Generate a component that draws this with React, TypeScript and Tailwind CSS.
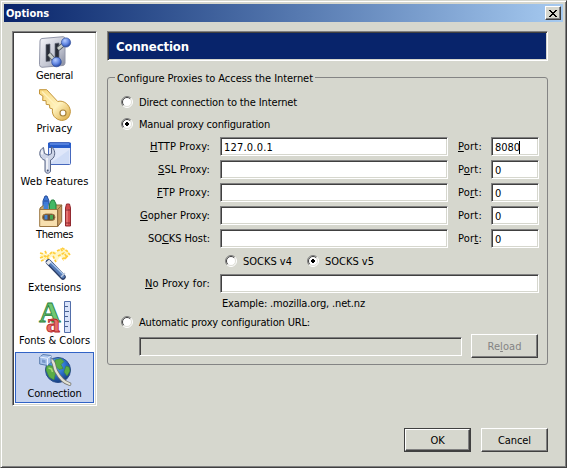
import { useLayoutEffect, useRef, useState, type ReactNode } from 'react';

/* Text run spaced out to a fixed advance width */
function T({ w, children, className = '' }: { w: number; children: ReactNode; className?: string }) {
  const ref = useRef<HTMLSpanElement>(null);
  const [gap, setGap] = useState(0);
  useLayoutEffect(() => {
    const el = ref.current;
    if (!el) return;
    const n = (el.textContent || '').length;
    setGap((w - el.getBoundingClientRect().width) / n);
  }, [w]);
  return (
    <span ref={ref} className={`inline-block whitespace-pre ${className}`} style={{ letterSpacing: gap }}>
      {children}
    </span>
  );
}

/* Label with an underlined access key at index k */
function Key({ text, k, w }: { text: string; k: number; w: number }) {
  return (
    <T w={w}>
      {text.slice(0, k)}
      <span className="underline decoration-1 underline-offset-1">{text.charAt(k)}</span>
      {text.slice(k + 1)}
    </T>
  );
}

const sunken =
  'border border-t-[#808080] border-l-[#808080] border-r-white border-b-white shadow-[inset_1px_1px_0_#404040,inset_-1px_-1px_0_#d6d7ce]';
const raised =
  'border border-t-white border-l-white border-r-[#404040] border-b-[#404040] shadow-[inset_-1px_-1px_0_#808080]';

function Field({ className, value, w = 0, caret }: { className: string; value?: string; w?: number; caret?: boolean }) {
  return (
    <div className={`flex h-[19px] items-center bg-white pl-[3px] pt-px ${sunken} ${className}`}>
      {value && <T w={w}>{value}</T>}
      {caret && <span className="-ml-px h-[13px] w-px bg-black" />}
    </div>
  );
}

function Radio({ on }: { on?: boolean }) {
  return (
    <svg width="12" height="12" viewBox="0 0 12 12" className="shrink-0">
      <circle cx="6" cy="6" r="5" fill="#fff" />
      <path d="M2.1 9.9A5.5 5.5 0 0 1 9.9 2.1" fill="none" stroke="#808080" />
      <path d="M2.8 9.2A4.5 4.5 0 0 1 9.2 2.8" fill="none" stroke="#404040" />
      <path d="M2.1 9.9A5.5 5.5 0 0 0 9.9 2.1" fill="none" stroke="#fff" />
      <path d="M2.8 9.2A4.5 4.5 0 0 0 9.2 2.8" fill="none" stroke="#dfdfd8" />
      {on && <path d="M5 4h2v1h1v2H7v1H5V7H4V5h1z" fill="#000" />}
    </svg>
  );
}

function Icon({ children }: { children: ReactNode }) {
  return (
    <svg width="32" height="32" viewBox="0 0 32 32" className="block overflow-visible">
      {children}
    </svg>
  );
}

const GeneralIcon = () => (
  <Icon>
    <defs>
      <linearGradient id="plate" x1="0" y1="0" x2="1" y2="1">
        <stop offset="0" stopColor="#f8f8fc" />
        <stop offset=".6" stopColor="#c3c6d2" />
        <stop offset="1" stopColor="#82879b" />
      </linearGradient>
      <radialGradient id="ball" cx=".38" cy=".3" r=".7">
        <stop offset="0" stopColor="#b5ccff" />
        <stop offset=".6" stopColor="#6286e2" />
        <stop offset="1" stopColor="#2848a0" />
      </radialGradient>
    </defs>
    <path d="M3 2.5 24 .7Q26 .6 26 3v24q0 2-2 2.500L3 31.300Q.5 31 .5 28.500L1 5Q1 2.800 3 2.500z" fill="url(#plate)" stroke="#9296a8" />
    <path d="M7 8.500 11 8v17l-4 .5zM16 7.500l4-.5v17l-4 .5z" fill="#292d38" stroke="#666b7b" strokeWidth=".7" />
    <path d="M10 18l6 7M19 13l7-6" stroke="#555c60" strokeWidth="4.500" />
    <path d="M10 18l6 7M19 13l7-6" stroke="#c9ceca" strokeWidth="2.800" />
    <circle cx="27" cy="6.500" r="4.600" fill="url(#ball)" stroke="#34529e" strokeWidth=".7" />
    <circle cx="17.500" cy="26" r="4.800" fill="url(#ball)" stroke="#34529e" strokeWidth=".7" />
  </Icon>
);

const PrivacyIcon = () => (
  <Icon>
    <defs>
      <linearGradient id="gold" x1="0" y1="0" x2="1" y2="1">
        <stop offset="0" stopColor="#f8d77b" />
        <stop offset=".55" stopColor="#fff2bd" />
        <stop offset="1" stopColor="#d9a63c" />
      </linearGradient>
    </defs>
    <path
      d="M.5.700h7.200l11 11.800c6-1.800 12.500 3.500 12.700 10-.5 6-4 9-9 8.900-6-.8-10-5.500-8.900-11.500l-2.700-.8-.3-3.300-3.300-.4-.2-3.700-3.300-.2.200-4.500-3.400-2z"
      fill="url(#gold)"
      stroke="#c3953b"
    />
    <path d="M3 2.500l14 14" stroke="#fff1bd" strokeWidth="1.500" />
    <circle cx="24" cy="24" r="3" fill="#fff" stroke="#a8843d" strokeWidth="1.200" />
  </Icon>
);

const WebIcon = () => (
  <Icon>
    <rect x="9.500" y=".5" width="22" height="22" rx="1" fill="#dfe7fa" stroke="#4668bd" />
    <path d="M9 1h23v5H9z" fill="#285dca" />
    <path d="M11 2h19" stroke="#7da3f1" />
    <path d="M12 21 30 8v14H12z" fill="#c8d7f4" opacity=".7" />
    <path
      d="M4.500 5.500c-4 2-5 7-2 10.500 1 1.200 2 2 3.500 2.300V29c.5 3 5 3 5.500 0V18c4-1.500 5.500-7 3-11l-2-2.200v6.700l-3 1.700-4-1.700z"
      fill="#cdd4e6"
      stroke="#596584"
    />
    <path d="M8 16v13M3 8.500v4" stroke="#fff" strokeWidth="1.300" />
    <circle cx="8.700" cy="28.500" r="1" fill="#465274" />
  </Icon>
);

const ThemesIcon = () => (
  <Icon>
    <path d="M4 12V6l2-5h2l2 5v7z" fill="#3f79d7" stroke="#244d9b" />
    <path d="M5 6h4" stroke="#244d9b" />
    <path d="M1 13l4-3h18l-4 5H1z" fill="#c8a468" stroke="#8c6b36" />
    <path d="M4.500 9h5v6h-5z" fill="#4081d7" />
    <path d="M10.500 15V9l2-4h2.500l2 4v6z" fill="#42b864" stroke="#23813e" />
    <path d="M.700 14.500h18v17h-18z" fill="#f7dfae" stroke="#9c7742" />
    <path d="M18.700 14.500l4-4.500v16.500l-4 5z" fill="#c89c60" stroke="#8b683c" />
    <rect x="3.500" y="19" width="12.500" height="6.500" rx="3.200" fill="#614a32" stroke="#9d7946" />
    <path d="M5.500 20h3v4.500h-3z" fill="#4381d1" />
    <path d="M11 20h3v4.500h-3z" fill="#49a651" />
    <path d="M26.500 13l1-4h3l1 4v18h-5z" fill="#d24b4c" stroke="#922a31" />
    <path d="M28 14v16" stroke="#f19994" />
    <path d="M26.500 15h5M26.500 28h5" stroke="#872d33" />
  </Icon>
);

const ExtensionsIcon = () => (
  <Icon>
    <path d="M1 7l4-2 3 3 5-5 5 1 3-3 6 1 4 4-5 5-5-2-3 4-4-5-7 4-5-2z" fill="#fff6c4" />
    <path
      d="M1 5l4 1M6 3l2 4M1 10l5-2 4 3M8 9l5-5 4 2M18 3l4-2 2 3M23 0l5 3 3 4M19 8l6-3 3 4-4 3M2 13l4-2M14 8l3 6M23 11l6-3"
      fill="none"
      stroke="#ffce3c"
      strokeWidth="1.700"
      strokeDasharray="3 1"
    />
    <path d="M9.500 14l14.500 15" stroke="#2c3f68" strokeWidth="5.500" strokeLinecap="round" />
    <path d="M10 14l14 14.500" stroke="#567bb6" strokeWidth="3.500" strokeLinecap="round" />
    <path d="M11 13.500l13.500 13" stroke="#a8c8ef" strokeWidth="1.200" />
    <path d="M8.500 13l2.500 2.500" stroke="#e4e6e9" strokeWidth="4.500" />
    <path d="M22 29l4-4" stroke="#c0cbdd" strokeWidth="1.500" />
  </Icon>
);

const FontsIcon = () => (
  <Icon>
    <text x="0" y="21" fontFamily="Liberation Serif, serif" fontSize="30" fontWeight="bold" fill="#70c873" stroke="#28813b" strokeWidth=".8">A</text>
    <text x="7" y="31" fontFamily="Liberation Serif, serif" fontSize="28" fontWeight="bold" fill="#e86c68" stroke="#b3282b" strokeWidth=".8">a</text>
    <path d="M25.500.5h6v31h-6z" fill="#d9e3fa" stroke="#526eaa" />
    <path d="M26 5.500h3M26 10.500h4M26 15.500h3M26 20.500h4M26 25.500h3" stroke="#48618e" />
  </Icon>
);

const ConnectionIcon = () => (
  <Icon>
    <defs>
      <radialGradient id="sea" cx=".4" cy=".3" r=".75">
        <stop offset="0" stopColor="#65b5ee" />
        <stop offset=".55" stopColor="#2a6dca" />
        <stop offset="1" stopColor="#163973" />
      </radialGradient>
    </defs>
    <circle cx="19" cy="16" r="12.500" fill="url(#sea)" stroke="#294d8b" />
    <path d="M8 11l5 1 4 5-2 9-5-3-3-7zM16 6l6-1.500 3 3-3 3 2 4-4 1-4-4zM27 12l3 1 1 4-3 5-3-4z" fill="#5aad45" stroke="#3c8534" strokeWidth=".6" />
    <path d="M9.500 14l3 1 1 3" fill="none" stroke="#a5da75" strokeWidth="1.500" />
    <path d="M11 5.500c5 1 3.500 7 6 11.500 3 5.500 8 11.500 13.500 13" fill="none" stroke="#74746e" strokeWidth="3.800" strokeLinecap="round" />
    <path d="M11 5.500c5 1 3.500 7 6 11.500 3 5.500 8 11.500 13.500 13" fill="none" stroke="#e2e2d6" strokeWidth="2.300" strokeLinecap="round" />
    <path d="M.7 3 4 .500l8 1v7L8.500 11.500.7 10z" fill="#a9c3ec" stroke="#5b7dad" />
    <path d="M1 3l7.500 1.300L12 2M8.500 4.300v7" fill="none" stroke="#eaf2ff" />
    <path d="M3 5.500l3.500.7v3L3 8.500z" fill="#7898cb" />
  </Icon>
);

const items = [
  { name: 'General', w: 37, icon: <GeneralIcon /> },
  { name: 'Privacy', w: 36, icon: <PrivacyIcon /> },
  { name: 'Web Features', w: 68, icon: <WebIcon /> },
  { name: 'Themes', w: 37, icon: <ThemesIcon /> },
  { name: 'Extensions', w: 53, icon: <ExtensionsIcon /> },
  { name: 'Fonts & Colors', w: 71, icon: <FontsIcon /> },
  { name: 'Connection', w: 54, icon: <ConnectionIcon /> },
];

const rows = [
  { label: 'HTTP Proxy:', k: 0, w: 60, value: '127.0.0.1', pk: 0, port: '8080' },
  { label: 'SSL Proxy:', k: 0, w: 52, value: '', pk: 1, port: '0' },
  { label: 'FTP Proxy:', k: 0, w: 53, value: '', pk: 2, port: '0' },
  { label: 'Gopher Proxy:', k: 0, w: 70, value: '', pk: -1, port: '0' },
  { label: 'SOCKS Host:', k: 2, w: 62, value: '', pk: 3, port: '0' },
];

export default function App() {
  return (
    <div className="flex h-[468px] w-[567px] flex-col overflow-hidden border border-t-[#d6d7ce] border-l-[#d6d7ce] border-r-[#404040] border-b-[#404040] bg-[#d6d7ce] font-['DejaVu_Sans_Condensed','DejaVu_Sans',sans-serif] text-[11px] leading-[13px] text-black shadow-[inset_1px_1px_0_#fff,inset_-1px_-1px_0_#808080]">
      <header className="mx-[3px] mt-[3px] flex h-[18px] shrink-0 items-center justify-between bg-gradient-to-r from-[#0a246a] to-[#a6caf0] pl-0.5 pr-0.5">
        <T w={43} className="font-bold text-white">Options</T>
        <button className={`flex h-3.5 w-4 items-center justify-center bg-[#d6d7ce] ${raised}`}>
          <svg width="8" height="7" viewBox="0 0 8 7" shapeRendering="crispEdges">
            <path d="M0 0h2v1h1v1h2V1h1V0h2v1H7v1H6v1H5v1h1v1h1v1h1v1H6V6H5V5H3v1H2v1H0V6h1V5h1V4h1V3H2V2H1V1H0z" />
          </svg>
        </button>
      </header>

      <div className="flex pl-[11px] pt-[9px]">
        <nav className={`flex h-[375px] w-[85px] shrink-0 flex-col items-center gap-0.5 bg-white pt-0.5 ${sunken}`}>
          {items.map((it, i) => (
            <div
              key={it.name}
              className={`flex h-[51px] w-[79px] shrink-0 flex-col items-center gap-px border pt-px ${
                i === 6 ? 'border-[#3163c6] bg-[#c6d3ef]' : 'border-transparent'
              }`}
            >
              {it.icon}
              <T w={it.w}>{it.name}</T>
            </div>
          ))}
        </nav>

        <main className="ml-2.5 w-[441px]">
          <h1 className={`flex h-[30px] items-center bg-[#08246b] pl-2 pt-0.5 text-[13px] font-bold leading-4 text-white ${sunken}`}>
            <T w={73}>Connection</T>
          </h1>

          <fieldset className="mt-2.5 h-[294px] rounded-[3px] border border-[#848484] pl-[13px]">
            <legend className="-ml-[6px] h-[13px] px-[2px] leading-[15px]">
              <T w={196}>Configure Proxies to Access the Internet</T>
            </legend>
            <div className="mt-3 flex h-3 items-center gap-1.5">
              <Radio />
              <T w={158}>Direct connection to the Internet</T>
            </div>
            <div className="mt-2.5 flex h-3 items-center gap-1.5">
              <Radio on />
              <T w={131}>Manual proxy configuration</T>
            </div>
            <div className="mt-[7px] flex flex-col gap-1">
              {rows.map((r, i) => (
                <div key={r.label} className="flex h-[19px] items-center">
                  <div className="flex w-[89px] justify-end">
                    <Key text={r.label} k={r.k} w={r.w} />
                  </div>
                  <Field className="ml-2.5 w-[228px]" value={r.value} w={49} />
                  <div className="ml-2.5 w-[33px]">
                    {r.pk < 0 ? <T w={24}>Port:</T> : <Key text="Port:" k={r.pk} w={24} />}
                  </div>
                  <Field className="w-12" value={r.port} w={i === 0 ? 25 : 6} caret={i === 0} />
                </div>
              ))}
            </div>
            <div className="mt-[7px] flex h-3 items-center pl-[104px]">
              <Radio />
              <T w={49} className="ml-1.5">SOCKS v4</T>
              <div className="w-[15px]" />
              <Radio on />
              <T w={49} className="ml-1.5">SOCKS v5</T>
            </div>
            <div className="mt-[7px] flex h-[19px] items-center">
              <div className="flex w-[89px] justify-end">
                <Key text="No Proxy for:" k={0} w={65} />
              </div>
              <Field className="ml-2.5 w-[319px]" />
            </div>
            <div className="mt-1 flex h-[13px] pl-[101px]">
              <T w={143}>Example: .mozilla.org, .net.nz</T>
            </div>
            <div className="mt-1.5 flex h-3 items-center gap-1.5">
              <Radio />
              <T w={171}>Automatic proxy configuration URL:</T>
            </div>
            <div className="mt-1.5 flex h-6 items-center pl-[18px]">
              <div className={`h-[19px] w-[323px] bg-[#d6d7ce] ${sunken}`} />
              <button className={`ml-[9px] flex h-6 w-[67px] items-center justify-center text-[#848484] ${raised}`}>
                <Key text="Reload" k={2} w={34} />
              </button>
            </div>
          </fieldset>
        </main>
      </div>

      <footer className="mt-[22px] flex gap-2.5 pl-[403px]">
        <div className="border border-[#404040]">
          <button className={`flex h-[22px] w-[65px] items-center justify-center ${raised}`}>
            <T w={14}>OK</T>
          </button>
        </div>
        <button className={`flex h-6 w-[67px] items-center justify-center ${raised}`}>
          <T w={33}>Cancel</T>
        </button>
      </footer>
    </div>
  );
}
